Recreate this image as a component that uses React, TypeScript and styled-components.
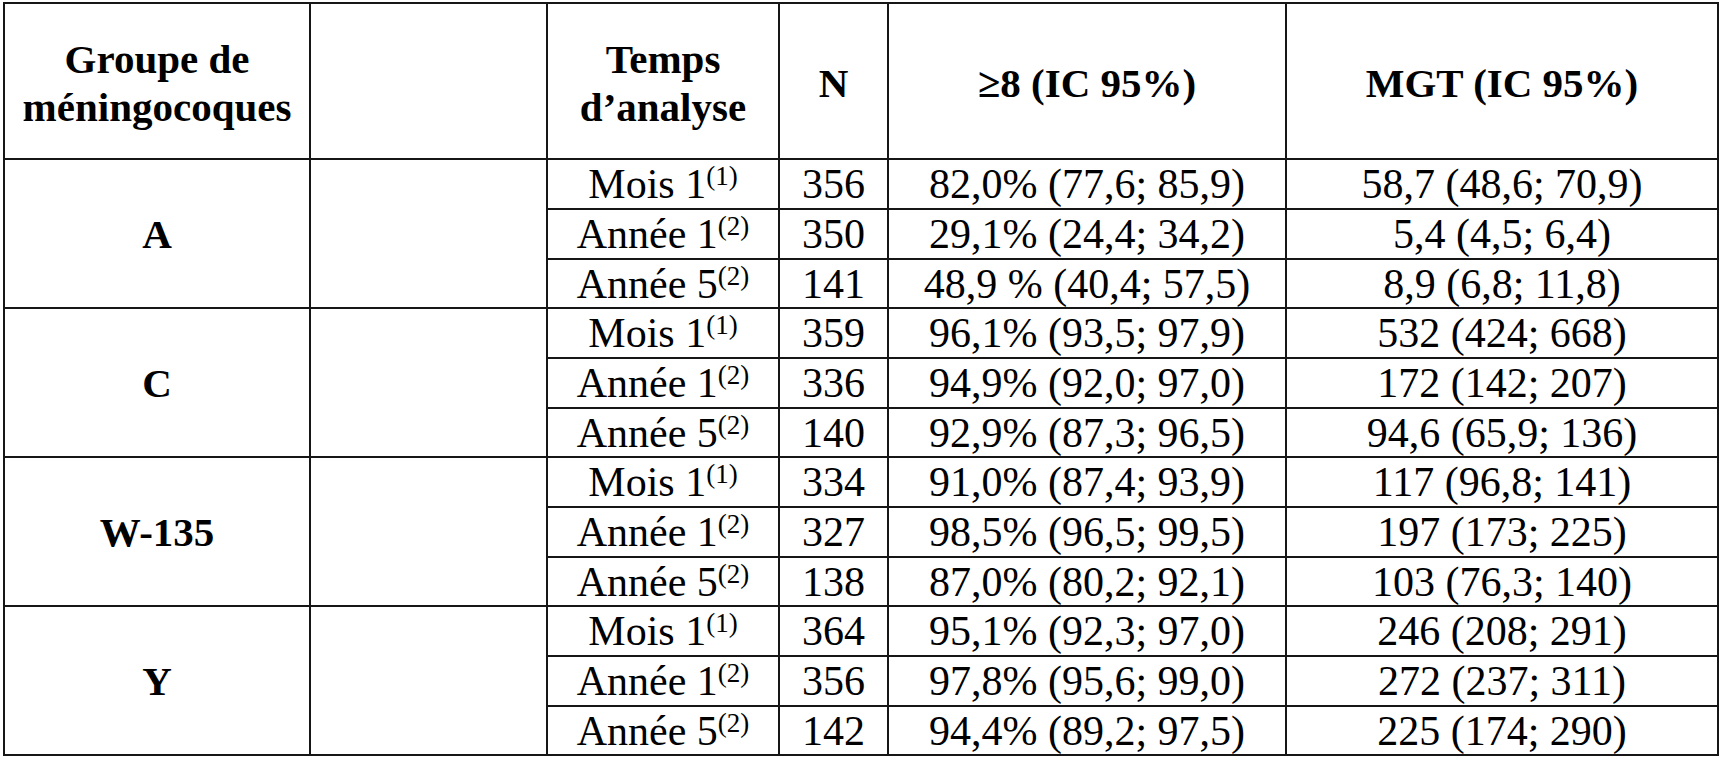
import React, {FC} from "react";
import styled, {createGlobalStyle} from "styled-components";

const lineColor = '#161616'

const GlobalStyle = createGlobalStyle`
  html, body {
    margin: 0;
    padding: 0;
    background: #fff;
  }
  body {
    font-family: "Liberation Serif", "Times New Roman", serif;
    color: #000;
  }
`
const Page = styled.div`
  padding: 2px 0 0 3px;
`
const Table = styled.table`
  border-collapse: collapse;
  table-layout: fixed;
  width: 1714px;
  border: 2px solid ${lineColor};
`
const HeadRow = styled.tr`
  height: 156px;
`
const HeadCell = styled.th`
  padding: 4px 0 0;
  border: 2px solid ${lineColor};
  font-size: 41px;
  line-height: 48px;
  font-weight: bold;
  text-align: center;
  vertical-align: middle;
`
const Row = styled.tr<{ $h: number }>`
  height: ${p => p.$h}px;
`
const Cell = styled.td`
  padding: 0;
  border: 2px solid ${lineColor};
  font-size: 42px;
  line-height: 44px;
  text-align: center;
  vertical-align: middle;
  white-space: nowrap;
`
const GroupCell = styled(Cell)`
  font-weight: bold;
  font-size: 41px;
`
const Sup = styled.sup`
  font-size: 27px;
  line-height: 0;
  vertical-align: 13px;
`

interface Measure {
  time: string
  note: string
  n: number
  ratio: string
  mgt: string
}
interface Group {
  name: string
  rows: Measure[]
}

const groups: Group[] = [
  {
    name: 'A', rows: [
      {time: 'Mois 1', note: '(1)', n: 356, ratio: '82,0% (77,6; 85,9)', mgt: '58,7 (48,6; 70,9)'},
      {time: 'Année 1', note: '(2)', n: 350, ratio: '29,1% (24,4; 34,2)', mgt: '5,4 (4,5; 6,4)'},
      {time: 'Année 5', note: '(2)', n: 141, ratio: '48,9 % (40,4; 57,5)', mgt: '8,9 (6,8; 11,8)'},
    ]
  },
  {
    name: 'C', rows: [
      {time: 'Mois 1', note: '(1)', n: 359, ratio: '96,1% (93,5; 97,9)', mgt: '532 (424; 668)'},
      {time: 'Année 1', note: '(2)', n: 336, ratio: '94,9% (92,0; 97,0)', mgt: '172 (142; 207)'},
      {time: 'Année 5', note: '(2)', n: 140, ratio: '92,9% (87,3; 96,5)', mgt: '94,6 (65,9; 136)'},
    ]
  },
  {
    name: 'W-135', rows: [
      {time: 'Mois 1', note: '(1)', n: 334, ratio: '91,0% (87,4; 93,9)', mgt: '117 (96,8; 141)'},
      {time: 'Année 1', note: '(2)', n: 327, ratio: '98,5% (96,5; 99,5)', mgt: '197 (173; 225)'},
      {time: 'Année 5', note: '(2)', n: 138, ratio: '87,0% (80,2; 92,1)', mgt: '103 (76,3; 140)'},
    ]
  },
  {
    name: 'Y', rows: [
      {time: 'Mois 1', note: '(1)', n: 364, ratio: '95,1% (92,3; 97,0)', mgt: '246 (208; 291)'},
      {time: 'Année 1', note: '(2)', n: 356, ratio: '97,8% (95,6; 99,0)', mgt: '272 (237; 311)'},
      {time: 'Année 5', note: '(2)', n: 142, ratio: '94,4% (89,2; 97,5)', mgt: '225 (174; 290)'},
    ]
  },
]

const rowHeights = [50, 50, 49]

const App: FC = () => {
  return (
    <Page>
      <GlobalStyle/>
      <Table>
        <colgroup>
          <col style={{width: 306}}/>
          <col style={{width: 237}}/>
          <col style={{width: 232}}/>
          <col style={{width: 109}}/>
          <col style={{width: 398}}/>
          <col style={{width: 432}}/>
        </colgroup>
        <thead>
        <HeadRow>
          <HeadCell>Groupe de<br/>méningocoques</HeadCell>
          <HeadCell/>
          <HeadCell>Temps<br/>d’analyse</HeadCell>
          <HeadCell>N</HeadCell>
          <HeadCell>≥8 (IC 95%)</HeadCell>
          <HeadCell>MGT (IC 95%)</HeadCell>
        </HeadRow>
        </thead>
        <tbody>
        {groups.map(group => group.rows.map((row, i) => (
          <Row key={group.name + i} $h={rowHeights[i]}>
            {i === 0 && <GroupCell rowSpan={3}>{group.name}</GroupCell>}
            {i === 0 && <Cell rowSpan={3}/>}
            <Cell>{row.time}<Sup>{row.note}</Sup></Cell>
            <Cell>{row.n}</Cell>
            <Cell>{row.ratio}</Cell>
            <Cell>{row.mgt}</Cell>
          </Row>
        )))}
        </tbody>
      </Table>
    </Page>
  )
}

export default App
